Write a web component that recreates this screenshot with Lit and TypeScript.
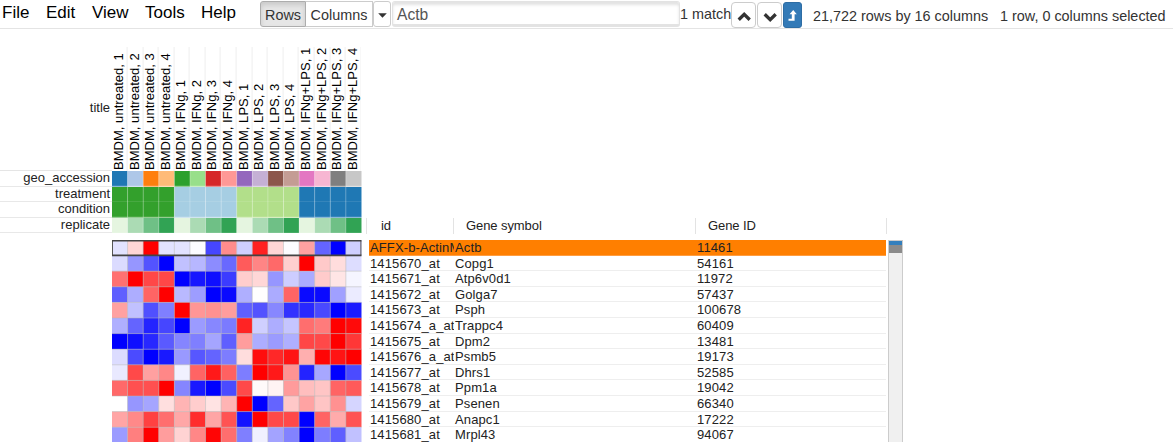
import { LitElement, html, css, svg } from "lit";
import { customElement } from "lit/decorators.js";

const TITLES = [
  ...[1, 2, 3, 4].map((n) => `BMDM, untreated, ${n}`),
  ...[1, 2, 3, 4].map((n) => `BMDM, IFNg, ${n}`),
  ...[1, 2, 3, 4].map((n) => `BMDM, LPS, ${n}`),
  ...[1, 2, 3, 4].map((n) => `BMDM, IFNg+LPS, ${n}`),
];

const GROUPS = ["#33a02c", "#a6cee3", "#b2df8a", "#1f78b4"].flatMap((c) => [c, c, c, c]);
const SHADES = ["#e5f5e0", "#abdbb4", "#6fc086", "#31a354"];
const TRACKS: [string, string[]][] = [
  ["geo_accession", ["#1f77b4", "#aec7e8", "#ff7f0e", "#ffbb78", "#2ca02c", "#98df8a", "#d62728", "#ff9896",
    "#9467bd", "#c5b0d5", "#8c564b", "#c49c94", "#e377c2", "#f7b6d2", "#7f7f7f", "#c7c7c7"]],
  ["treatment", GROUPS],
  ["condition", GROUPS],
  ["replicate", [...SHADES, ...SHADES, ...SHADES, ...SHADES]],
];

// Negative values run towards blue, positive towards red; 255 is saturated.
const ROWS: [string, string, string, number[]][] = [
  ["AFFX-b-ActinMur", "Actb", "11461", [-29, 42, 255, -29, -29, -3, -185, 115, -48, 222, 42, -3, 94, -155, -255, -48]],
  ["1415670_at", "Copg1", "54161", [-36, -105, -172, -255, -62, -72, -115, -150, 164, 122, 150, 48, 255, 54, 34, -34]],
  ["1415671_at", "Atp6v0d1", "11972", [142, 255, 184, 184, -255, -232, -240, -195, 50, 40, -105, -50, -84, 52, 26, -10]],
  ["1415672_at", "Golga7", "57437", [-160, -82, 155, 255, -70, -98, -255, -245, -80, 1, -84, 155, -245, -245, -95, -20]],
  ["1415673_at", "Psph", "100678", [94, -62, -175, -128, 255, 105, 110, 98, -160, -172, -120, -205, -215, -182, -255, -228]],
  ["1415674_a_at", "Trappc4", "60409", [-80, -155, -220, -185, -255, -100, -120, -132, 220, -48, -82, -58, 145, 132, 255, 245]],
  ["1415675_at", "Dpm2", "13481", [-255, -240, -215, -165, -122, -128, -90, -160, 98, -82, -100, -80, 185, 182, 255, 200]],
  ["1415676_a_at", "Psmb5", "19173", [-35, -180, -255, -230, -102, -168, -155, -130, 34, 242, 215, 235, 80, 250, 235, 255]],
  ["1415677_at", "Dhrs1", "52585", [-22, 182, 95, 120, -14, 155, 230, 158, -130, 255, 230, 108, -220, -88, -255, -180]],
  ["1415678_at", "Ppm1a", "19042", [150, 175, 175, 255, -122, -230, -255, -180, 182, 5, 12, 100, 65, 58, 155, 165]],
  ["1415679_at", "Psenen", "66340", [0, -105, -90, 32, 75, 50, 28, 75, 255, -255, -155, 55, 92, 58, 110, -42]],
  ["1415680_at", "Anapc1", "17222", [90, 118, 190, 145, 88, 210, 90, 172, -235, 255, 182, 182, -255, 155, 84, 172]],
  ["1415681_at", "Mrpl43", "94067", [-100, 128, 255, 98, 44, 120, 250, 145, -128, -15, -92, -125, -255, -130, -160, -62]],
];

const shade = (v: number) =>
  v < 0 ? `rgb(${255 + v},${255 + v},255)` : `rgb(255,${255 - v},${255 - v})`;

@customElement("menu-bar")
class MenuBar extends LitElement {
  static styles = css`
    :host { display: block; height: 28px; border-bottom: 1px solid #e4e4e4; color: #333; }
    .bar { display: flex; height: 30px; align-items: flex-start; white-space: nowrap; font-size: 14.4px; }
    .menus { display: flex; width: 260px; box-sizing: border-box; padding-left: 2px; font-size: 17px; line-height: 26px; color: #000; }
    .menus span { display: block; }
    .file { width: 44px; } .edit { width: 46px; } .view { width: 53px; } .tools { width: 56px; }
    .btn { box-sizing: border-box; height: 26px; margin-top: 1px; border: 1px solid #ccc; background: #fff; border-radius: 3px; display: flex; align-items: center; justify-content: center; padding-top: 2px; }
    .rows { width: 46px; background: #e6e6e6; border-color: #adadad; border-radius: 3px 0 0 3px; box-shadow: inset 0 3px 5px rgba(0,0,0,.125); }
    .cols { width: 67px; border-left: 0; border-radius: 0; }
    .drop { width: 18px; border-radius: 3px; margin-right: 1px; }
    .search { box-sizing: border-box; width: 288px; height: 26px; margin: 1px 0 0; padding: 0 0 0 4px; border: 1px solid #e3e3e3; border-bottom-width: 3px; border-radius: 3px; box-shadow: inset 0 3px 3px #e3e3e3; line-height: 26px; color: #555; font-size: 15.6px; }
    .match { width: 51px; line-height: 28px; }
    .nav, .top { height: 26px; margin-top: 2px; padding-top: 0; }
    .nav { width: 25px; border-radius: 4px; margin-right: 1px; }
    .top { width: 19px; border-radius: 3px; background: #337ab7; border-color: #2e6da4; }
    .dims { margin-left: 11px; width: 187px; line-height: 32px; }
    .sel { line-height: 32px; }
    svg { display: block; flex: none; }
  `;
  render() {
    return html`<div class="bar">
      <div class="menus"><span class="file">File</span><span class="edit">Edit</span><span class="view">View</span><span class="tools">Tools</span><span>Help</span></div>
      <div class="btn rows">Rows</div><div class="btn cols">Columns</div>
      <div class="btn drop"><svg width="9" height="5"><path d="M0.2 0.2h8.6L4.5 4.8z" fill="#333"/></svg></div>
      <div class="search">Actb</div>
      <div class="match">1 match</div>
      <div class="btn nav"><svg width="16" height="22" viewBox="0 0 16 22"><path d="M2.7 15.7 8.2 10.3l5.5 5.4" fill="none" stroke="#333" stroke-width="3.3"/></svg></div>
      <div class="btn nav"><svg width="16" height="22" viewBox="0 0 16 22"><path d="M2.7 10.3 8.2 15.7l5.5-5.4" fill="none" stroke="#333" stroke-width="3.3"/></svg></div>
      <div class="btn top"><svg width="11" height="14" viewBox="0 0 11 14"><path d="M6.2 2 9.8 6.3H7.6v6.4H1.5v-2h3.3V6.3H2.6z" fill="#fff"/></svg></div>
      <div class="dims">21,722 rows by 16 columns</div><div class="sel">1 row, 0 columns selected</div>
    </div>`;
  }
}

@customElement("sample-header")
class SampleHeader extends LitElement {
  static styles = css`
    :host { display: block; }
    .titles { display: flex; height: 124px; }
    .name { width: 112px; box-sizing: border-box; padding-right: 2px; text-align: right; line-height: 15px; border-bottom: 1px solid #e5e5e5; padding-top: 53px; }
    .labels { display: grid; grid-template-columns: repeat(16, 15.59px); height: 124px; overflow: hidden; }
    .label { box-sizing: border-box; height: 124px; border-left: 1px solid #eee; writing-mode: vertical-rl; transform: rotate(180deg); line-height: 14px; white-space: nowrap; padding-top: 1px; color: #000; font-size: 13px; letter-spacing: .03px; }
    .track { display: flex; height: 15.6px; }
    .caption { width: 112px; height: 15.6px; box-sizing: border-box; border-bottom: 1px solid #e8e8e8; padding-right: 2px; text-align: right; line-height: 13px; }
    svg { display: block; }
  `;
  render() {
    return html`
      <div class="titles"><div class="name">title</div>
        <div class="labels">${TITLES.map((t) => html`<div class="label">${t}</div>`)}</div></div>
      ${TRACKS.map(([name, colors]) => html`<div class="track"><div class="caption">${name}</div>
        <svg width="250" height="15.6">${colors.map((c, i) => svg`<rect x=${i * 15.59} y="0" width="15.64" height="15.6" fill=${c} />`)}
          <path d=${colors.slice(1).map((_, i) => `M${(i + 1) * 15.59} 0v15.6`).join("") + "M0 15.1h249.4"} fill="none" stroke="#fff" stroke-opacity=".25"/></svg></div>`)}
    `;
  }
}

@customElement("heat-map")
class HeatMap extends LitElement {
  static styles = css`:host { display: block; } svg { display: block; }`;
  render() {
    const p = 15.59;
    const lines = Array.from({ length: 15 }, (_, i) => `M${(i + 1) * p} 0v203`).join("") +
      Array.from({ length: 12 }, (_, i) => `M0 ${(i + 1) * 15.6}h249.4`).join("");
    return html`<svg width="250" height="202">
      ${ROWS.map(([, , , vals], r) => vals.map((v, c) => svg`<rect x=${c * p} y=${r * 15.6} width=${p + 0.05} height="15.65" fill=${shade(v)} />`))}
      <path d=${lines} fill="none" stroke="#b4b4b4" stroke-opacity=".5"/>
      <path d="M0.5 0.5h248.4v15H0.5z" fill="none" stroke="#555"/>
      <path d="M0 0.6h249.4M0 15.4h249.4" stroke="#444" stroke-width="1.7"/>
    </svg>`;
  }
}

@customElement("gene-table")
class GeneTable extends LitElement {
  static styles = css`
    :host { display: block; width: 521px; }
    .head { display: flex; height: 22px; line-height: 15px; }
    .head span { box-sizing: border-box; height: 16px; border-left: 1px solid #e3e3e3; letter-spacing: -.08px; }
    .h1 { width: 87px; padding-left: 14px; } .h2 { width: 242px; padding-left: 12px; }
    .h3 { width: 191px; padding-left: 12px; } .h4 { width: 1px; }
    .row { display: flex; height: 15.6px; box-sizing: border-box; margin-left: 3px; width: 517px; border-bottom: 1px solid #eee; line-height: 15px; letter-spacing: .12px; }
    .hit { background: #ff7f00; border-color: #ff9d40; }
    .id { width: 85px; padding-left: 1px; overflow: hidden; white-space: nowrap; box-sizing: border-box; height: 17px; }
    .symbol { width: 242px; padding-left: 1px; box-sizing: border-box; }
    .gene { padding-left: 1px; }
  `;
  render() {
    return html`<div class="head"><span class="h1">id</span><span class="h2">Gene symbol</span><span class="h3">Gene ID</span><span class="h4"></span></div>
      ${ROWS.map(([id, sym, gene], i) => html`<div class="row ${i ? "" : "hit"}"><div class="id">${id}</div><div class="symbol">${sym}</div><div class="gene">${gene}</div></div>`)}`;
  }
}

@customElement("app-root")
class AppRoot extends LitElement {
  static styles = css`
    :host { display: block; height: 442px; overflow: hidden; background: #fff; color: #222; font: 13px "Liberation Sans", Arial, sans-serif; }
    .body { display: grid; grid-template-columns: 366px 521px 16px; padding-top: 18px; }
    .map { margin: 7px 0 0 112px; height: 202px; }
    .table { padding-top: 171px; }
    .scroll { margin: 193px 0 0 1px; height: 202px; width: 15px; box-sizing: border-box; border: 1px solid #ccc; border-bottom: 0; background: #f0f0f0; }
    .mark { height: 4px; background: #337fbd; }
    .thumb { height: 8px; background: #8b8b8b; }
  `;
  render() {
    return html`<menu-bar></menu-bar>
      <div class="body">
        <div class="left"><sample-header></sample-header><div class="map"><heat-map></heat-map></div></div>
        <div class="table"><gene-table></gene-table></div>
        <div class="scroll"><div class="mark"></div><div class="thumb"></div></div>
      </div>`;
  }
}
